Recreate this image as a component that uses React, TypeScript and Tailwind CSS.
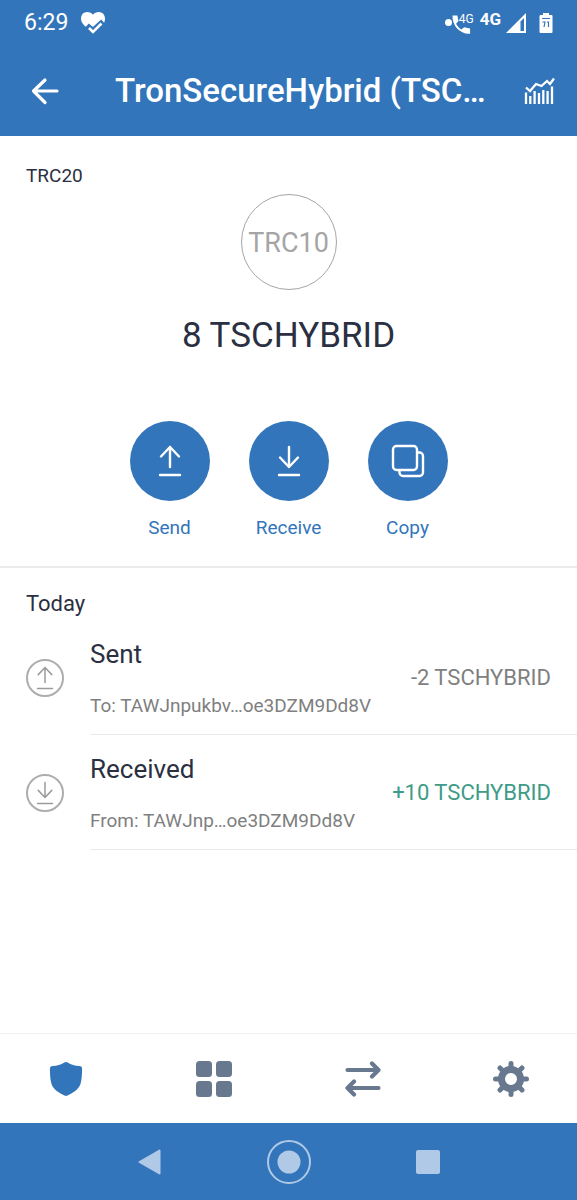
import clsx from "clsx";

type IconProps = { className?: string };

const SendIcon = ({ className }: IconProps) => (
  <svg viewBox="0 0 24 32" fill="none" stroke="currentColor" strokeLinecap="round" strokeLinejoin="round" className={className}>
    <path d="M12 22V2M3 11.500 12 2l9 9.500M2 30h20" />
  </svg>
);

const ReceiveIcon = ({ className }: IconProps) => (
  <svg viewBox="0 0 24 32" fill="none" stroke="currentColor" strokeLinecap="round" strokeLinejoin="round" className={className}>
    <path d="M12 2v20M3 12.500 12 22l9-9.500M2 30h20" />
  </svg>
);

const CopyIcon = ({ className }: IconProps) => (
  <svg viewBox="0 0 34 34" fill="none" stroke="currentColor" strokeLinejoin="round" className={className}>
    <rect x="2" y="2" width="24" height="24" rx="3.500" />
    <path d="M26.500 8.500h2a3.500 3.500 0 0 1 3.500 3.500v16.500a3.500 3.500 0 0 1-3.500 3.500H12a3.500 3.500 0 0 1-3.500-3.500v-2" />
  </svg>
);

const actions = [
  { label: "Send", icon: <SendIcon className="h-8 w-6 stroke-[2.4]" /> },
  { label: "Receive", icon: <ReceiveIcon className="h-8 w-6 stroke-[2.4]" /> },
  { label: "Copy", icon: <CopyIcon className="size-[34px] stroke-[2.4]" /> },
];

const transactions = [
  {
    title: "Sent",
    address: "To: TAWJnpukbv…oe3DZM9Dd8V",
    amount: "-2 TSCHYBRID",
    incoming: false,
  },
  {
    title: "Received",
    address: "From: TAWJnp…oe3DZM9Dd8V",
    amount: "+10 TSCHYBRID",
    incoming: true,
  },
];

const StatusBar = () => (
  <div className="flex h-[46px] items-center justify-between px-6">
    <div className="flex items-center gap-3">
      <span className="text-[23px] leading-6">6:29</span>
      <svg viewBox="0 0 26 24" className="h-6 w-[26px]">
        <path
          d="M12 20.500C6 16 1 13 1 7.500 1 3.800 3.700 1 7.200 1 9.600 1 11.700 1.800 13 3.800 14.300 1.800 16.400 1 18.800 1 22.300 1 25 3.800 25 7.500c0 2.500-.8 4.500-2 6L13 20.500Z"
          fill="#fff"
        />
        <path d="m7 14.500 6 5L23 10.500" fill="none" stroke="#3275bb" strokeWidth="5.500" />
        <path d="m9 17 4 4 8.500-8.500" fill="none" stroke="#fff" strokeWidth="2.600" />
      </svg>
    </div>
    <div className="flex items-center">
      <svg viewBox="0 0 26 24" fill="#fff" className="h-6 w-[26px]">
        <circle cx="3.500" cy="11.500" r="3.500" />
        <path d="M7.500 4.500h4.800l1.200 5.500-2.400 2.800c1.300 2.600 3 4.400 5.400 5.700l2.600-2.300 6 1.200v5.300C15.500 23.500 7 15 7.500 4.500Z" />
      </svg>
      <span className="-ml-3 self-start text-[12px] leading-4">4G</span>
      <span className="ml-1.5 self-start text-[17px] font-bold leading-4">4G</span>
      <svg viewBox="0 0 22 22" className="ml-1 size-[22px]">
        <path d="M21 1v20H1L21 1Z" fill="#fff" />
        <path d="M15.500 9.500 19 6V19h-3.500Z" fill="#3275bb" />
      </svg>
      <svg viewBox="0 0 14 22" className="ml-3 h-[22px] w-[14px]">
        <path d="M4 1h6v2h2.500q1 0 1 1v16q0 1-1 1h-11q-1 0-1-1V4q0-1 1-1H4Z" fill="#fff" />
        <path d="M3 6.500h8M3.500 10H6l-1 5M8 10h1.500v5" fill="none" stroke="#3275bb" strokeWidth="1.200" />
      </svg>
    </div>
  </div>
);

const Header = () => (
  <header className="flex h-[90px] items-center pl-[30px] pr-[22px]">
    <button type="button" aria-label="Back" className="flex w-[85px] shrink-0">
      <svg viewBox="0 0 30 30" fill="none" stroke="#fff" strokeWidth="3.200" strokeLinecap="round" strokeLinejoin="round" className="size-[30px]">
        <path d="M27 15H4M15 4 3.500 15 15 26.500" />
      </svg>
    </button>
    <h1 className="min-w-0 flex-1 whitespace-nowrap text-[33px] font-medium leading-10">
      TronSecureHybrid (TSC…
    </h1>
    <button type="button" aria-label="Chart">
      <svg viewBox="0 0 32 28" fill="none" stroke="#fff" strokeWidth="2.300" className="h-7 w-8">
        <path d="M3 27V15.500M7.300 27v-8M11.600 27V14M16 27V16M20.300 27V13M24.600 27V14M29 27V9.500" />
        <path d="m3 10.500 4 3.500 6-7 5.500 2L24 4l3 3 4-5.500" />
      </svg>
    </button>
  </header>
);

const TabBar = () => (
  <nav className="flex h-[90px] items-center justify-between border-t border-[#f2f2f2] px-12 text-[#68798f]">
    <button type="button" aria-label="Wallet">
      <svg viewBox="0 0 36 36" fill="#3275bb" className="size-9">
        <path d="M16.300 1.400q1.700-.9 3.400 0C23 3.500 27 4.800 31.200 4.900q3 .1 2.900 3c-.1 5.500-.3 10.500-1.600 15-1.800 5.800-8 8.800-13 11.700q-1.500.8-3 0c-5-2.900-11.200-5.900-13-11.700C2.200 18.400 2 13.400 1.900 7.900q-.1-2.900 2.900-3C9 4.800 13 3.500 16.300 1.400Z" />
      </svg>
    </button>
    <button type="button" aria-label="Apps">
      <svg viewBox="0 0 36 36" fill="currentColor" className="size-9">
        <rect x="0" y="0" width="16" height="16" rx="3.500" />
        <rect x="20" y="0" width="16" height="16" rx="3.500" />
        <rect x="0" y="20" width="16" height="16" rx="3.500" />
        <rect x="20" y="20" width="16" height="16" rx="3.500" />
      </svg>
    </button>
    <button type="button" aria-label="Swap">
      <svg viewBox="0 0 36 36" fill="none" stroke="currentColor" strokeWidth="4.200" strokeLinecap="round" strokeLinejoin="round" className="size-9">
        <path d="M2.500 9H33M27 2.500 33.500 9 27 15.500M33.500 27H3M9 20.500 2.500 27 9 33.500" />
      </svg>
    </button>
    <button type="button" aria-label="Settings">
      <svg viewBox="-18 -18 36 36" className="size-9">
        <g stroke="currentColor" strokeWidth="5" strokeLinecap="round">
          <path d="M0-15.500V-9M0 15.500V9M-15.500 0H-9M15.500 0H9M-11-11-7-7M11-11 7-7M-11 11-7 7M11 11 7 7" />
        </g>
        <circle r="9.500" fill="none" stroke="currentColor" strokeWidth="7" />
      </svg>
    </button>
  </nav>
);

const SystemNav = () => (
  <nav className="flex h-[77px] items-center justify-center gap-[95px] bg-[#3275bb] text-[#b0c9e6]">
    <button type="button" aria-label="System back" className="flex w-11 justify-center">
      <svg viewBox="0 0 24 28" fill="currentColor" stroke="currentColor" strokeWidth="2" strokeLinejoin="round" className="h-7 w-6">
        <path d="M21.500 2.500v23L1.500 14Z" />
      </svg>
    </button>
    <button type="button" aria-label="Home" className="flex w-11 justify-center">
      <svg viewBox="0 0 44 44" fill="none" stroke="currentColor" strokeWidth="2" className="size-11">
        <circle cx="22" cy="22" r="21" />
        <circle cx="22" cy="22" r="11.500" fill="currentColor" stroke="none" />
      </svg>
    </button>
    <button type="button" aria-label="Recent apps" className="flex w-11 justify-center">
      <span className="size-6 rounded-xs bg-[#b0c9e6]" />
    </button>
  </nav>
);

const App = () => {
  return (
    <div className="flex min-h-screen flex-col bg-white font-[Roboto,sans-serif] text-[#2b2f42]">
      <div className="bg-[#3275bb] text-white">
        <StatusBar />
        <Header />
      </div>

      <main className="flex-1">
        {/* Balance */}
        <section className="flex flex-col items-center border-b-2 border-[#ebebeb] pb-[26px] pt-7">
          <p className="w-full px-[26px] text-[19px] leading-6">TRC20</p>
          <div className="mt-1.5 grid size-24 place-content-center rounded-full border border-[#a5a5a5] pt-0.5 text-[27px] text-[#a5a5a5]">
            TRC10
          </div>
          <p className="mt-6 text-[35px] leading-[43px]">8 TSCHYBRID</p>

          <div className="mt-16 flex gap-[39px]">
            {actions.map((action) => (
              <button
                key={action.label}
                type="button"
                className="flex w-20 flex-col items-center gap-[15px] text-[#3275bb]"
              >
                <span className="grid size-20 place-content-center rounded-full bg-[#3275bb] text-white">
                  {action.icon}
                </span>
                <span className="text-[19px] leading-6">{action.label}</span>
              </button>
            ))}
          </div>
        </section>

        {/* Transactions */}
        <section>
          <h2 className="px-[26px] pt-5 text-[22px] leading-8">Today</h2>
          <ul>
            {transactions.map((item) => (
              <li key={item.title} className="flex items-center pl-[26px]">
                <span className="mr-[26px] grid size-[38px] shrink-0 place-content-center rounded-full border-2 border-[#adadad] text-[#9b9b9b]">
                  {item.incoming ? (
                    <ReceiveIcon className="h-6 w-[18px] stroke-2" />
                  ) : (
                    <SendIcon className="h-6 w-[18px] stroke-2" />
                  )}
                </span>
                <div className="flex min-w-0 flex-1 items-center justify-between border-b border-[#ebebeb] pb-4 pr-[26px] pt-[18px]">
                  <div className="flex flex-col gap-6">
                    <p className="text-[26px] leading-8">{item.title}</p>
                    <p className="text-[19px] leading-6 text-[#7f7f7f]">{item.address}</p>
                  </div>
                  <p
                    className={clsx(
                      "whitespace-nowrap text-[22px] leading-8",
                      item.incoming ? "text-[#3d9b88]" : "text-[#7f7f7f]"
                    )}
                  >
                    {item.amount}
                  </p>
                </div>
              </li>
            ))}
          </ul>
        </section>
      </main>

      <TabBar />
      <SystemNav />
    </div>
  );
};

export default App;
